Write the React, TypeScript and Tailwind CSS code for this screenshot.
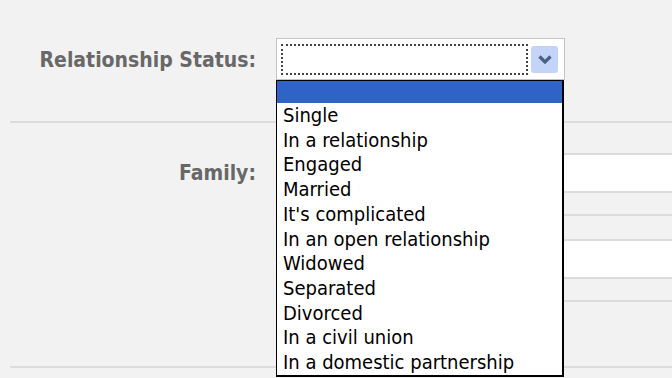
const options = [
  "Single",
  "In a relationship",
  "Engaged",
  "Married",
  "It's complicated",
  "In an open relationship",
  "Widowed",
  "Separated",
  "Divorced",
  "In a civil union",
  "In a domestic partnership",
];

export default function App() {
  return (
    <div className="relative w-[672px] h-[378px] overflow-hidden bg-[#f2f2f2] font-['DejaVu_Sans_Condensed','DejaVu_Sans',sans-serif]">
      {/* relationship row */}
      <div className="flex items-center gap-[20px] pt-[38px]">
        <div className="w-[256px] pt-[4px] text-right text-[21px] font-bold text-[#686868]">Relationship Status:</div>
        <div className="w-[289px] h-[42px] bg-white border border-[#c4c4c4] flex items-center pl-[4px] pr-[6px] gap-[3px]">
          <div className="flex-1 h-[31px] border-2 border-dotted border-[#444]" />
          <div className="w-[27px] h-[27px] rounded-[3px] bg-[#c3d4f8] flex items-center justify-center">
            <svg width="16" height="11" viewBox="0 0 16 11">
              <path d="M2.5 2.5 L8 8 L13.5 2.5" fill="none" stroke="#4a5e86" strokeWidth="3.2" />
            </svg>
          </div>
        </div>
      </div>

      <div className="ml-[10px] mt-[41px] h-[2px] bg-[#dcdcdc]" />

      {/* family row */}
      <div className="flex gap-[20px] pt-[30px]">
        <div className="w-[256px] h-[40px] pt-[2px] flex items-center justify-end text-[21px] font-bold text-[#686868]">Family:</div>
        <div className="flex-1">
          <div className="h-[40px] bg-white border-y-2 border-[#dcdcdc]" />
          <div className="h-[23px] border-b-2 border-[#dcdcdc]" />
          <div className="h-[23px]" />
          <div className="h-[40px] bg-white border-y-2 border-[#dcdcdc]" />
          <div className="h-[23px] border-b-2 border-[#dcdcdc]" />
        </div>
      </div>

      <div className="ml-[10px] mt-[64px] h-[2px] bg-[#dcdcdc]" />

      {/* open dropdown list */}
      <div className="absolute left-[276px] top-[80px] w-[288px] bg-white border border-black border-r-2 border-b-2">
        <div className="h-[22px] bg-[#2f63c6]" />
        {options.map((o) => (
          <div key={o} className="pl-[6px] text-[20px] leading-[24.7px] text-black whitespace-nowrap">{o}</div>
        ))}
      </div>
    </div>
  );
}
